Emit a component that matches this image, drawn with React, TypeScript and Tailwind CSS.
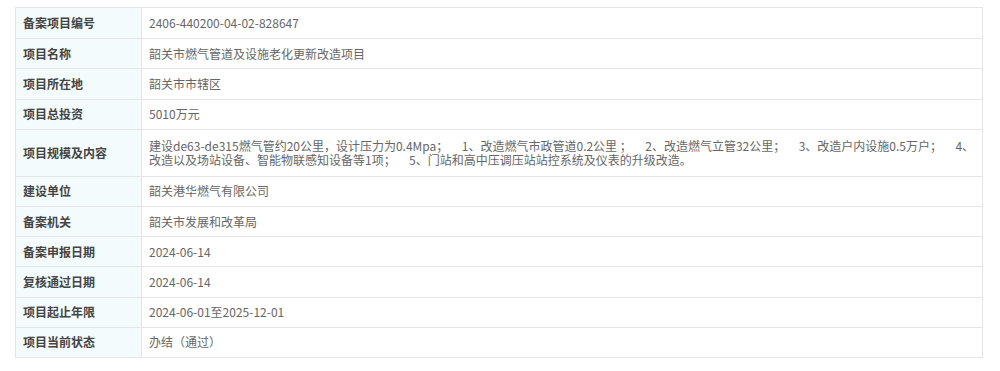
import React from "react";

const sp = "\u00a0\u00a0\u00a0\u00a0\u00a0";

const rows: { label: string; value: React.ReactNode; tall?: boolean }[] = [
  { label: "备案项目编号", value: "2406-440200-04-02-828647" },
  { label: "项目名称", value: "韶关市燃气管道及设施老化更新改造项目" },
  { label: "项目所在地", value: "韶关市市辖区" },
  { label: "项目总投资", value: "5010万元" },
  {
    label: "项目规模及内容",
    tall: true,
    value: (
      <>
        {`建设de63-de315燃气管约20公里，设计压力为0.4Mpa；${sp}1、改造燃气市政管道0.2公里\u00a0；${sp}2、改造燃气立管32公里；${sp}3、改造户内设施0.5万户；${sp}4、`}
        <br />
        {`改造以及场站设备、智能物联感知设备等1项；${sp}5、门站和高中压调压站站控系统及仪表的升级改造。`}
      </>
    ),
  },
  { label: "建设单位", value: "韶关港华燃气有限公司" },
  { label: "备案机关", value: "韶关市发展和改革局" },
  { label: "备案申报日期", value: "2024-06-14" },
  { label: "复核通过日期", value: "2024-06-14" },
  { label: "项目起止年限", value: "2024-06-01至2025-12-01" },
  { label: "项目当前状态", value: "办结（通过）" },
];

export default function App() {
  return (
    <div
      className="w-[1000px] h-[371px] bg-white pt-[7px] pl-[15px]"
      style={{ fontFamily: '"Microsoft YaHei", "Noto Sans CJK SC", sans-serif' }}
    >
      <div className="w-[968px] border border-[#e4e6e6] flex flex-col">
        {rows.map((r, i) => (
          <div
            key={i}
            className={`flex ${i > 0 ? "border-t border-[#e4e6e6]" : ""} ${
              r.tall ? "h-[47px]" : "h-[30.2px]"
            }`}
          >
            <div className="w-[126px] shrink-0 bg-[#f4fbfc] border-r border-[#e4e6e6] flex items-center pl-[7px] text-[12px] font-bold text-[#444]">
              {r.label}
            </div>
            <div
              className={`flex-1 flex items-center pl-[7px] pr-[4px] text-[12px] text-[#666] whitespace-nowrap ${
                r.tall ? "leading-[14px]" : ""
              }`}
            >
              <div>{r.value}</div>
            </div>
          </div>
        ))}
      </div>
    </div>
  );
}
